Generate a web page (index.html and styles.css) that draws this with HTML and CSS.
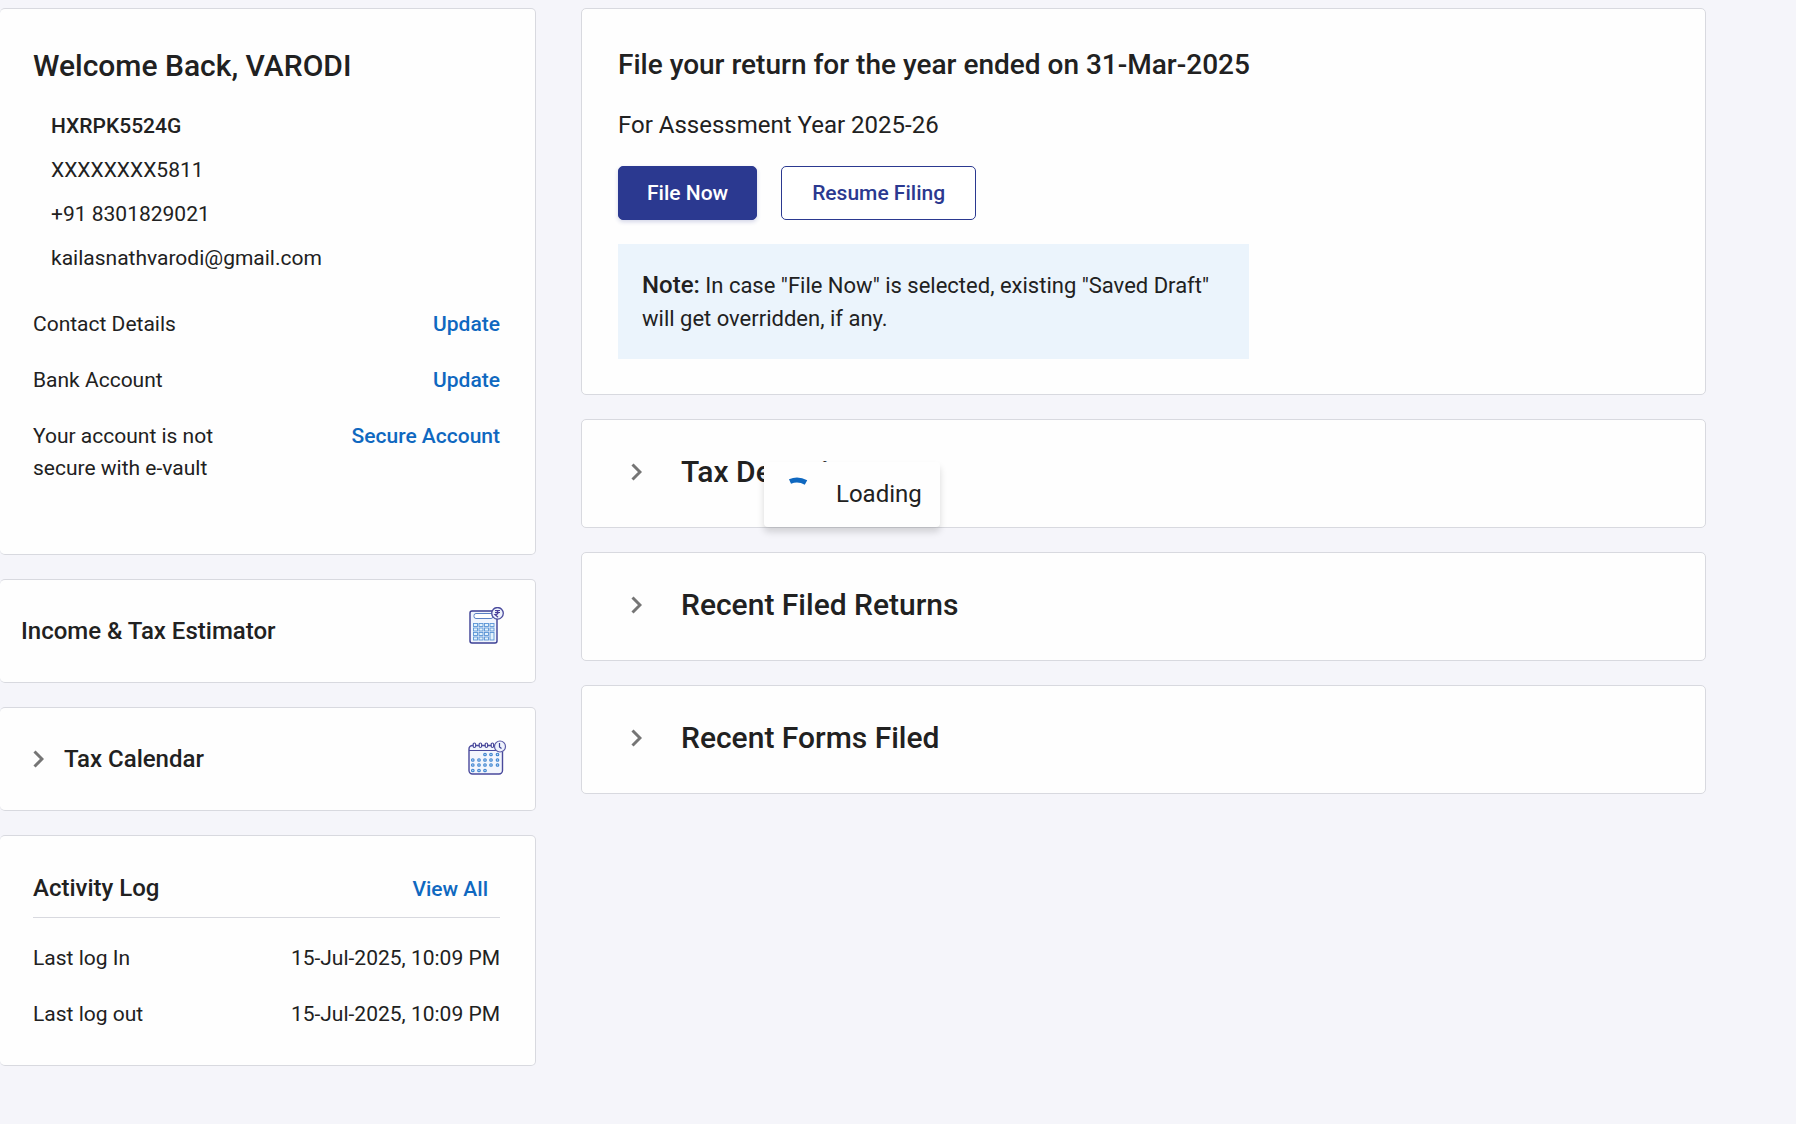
FILE: index.html
```html
<!DOCTYPE html>
<html lang="en">
<head>
    <meta charset="UTF-8">
    <meta name="viewport" content="width=device-width, initial-scale=1.0">
    <title>Dashboard</title>
    <link rel="stylesheet" href="styles.css">
</head>
<body>
    <div class="dashboard">
        <aside class="sidebar">
            <section class="card profile">
                <h1 class="profile-title">Welcome Back, VARODI</h1>
                <ul class="profile-info">
                    <li class="pan">HXRPK5524G</li>
                    <li>XXXXXXXX5811</li>
                    <li>+91 8301829021</li>
                    <li>kailasnathvarodi@gmail.com</li>
                </ul>
                <div class="rows">
                    <div class="row">
                        <span class="row-label">Contact Details</span>
                        <a class="link" href="#">Update</a>
                    </div>
                    <div class="row">
                        <span class="row-label">Bank Account</span>
                        <a class="link" href="#">Update</a>
                    </div>
                    <div class="row">
                        <span class="row-label">Your account is not secure with e-vault</span>
                        <a class="link" href="#">Secure Account</a>
                    </div>
                </div>
            </section>

            <section class="card tool">
                <h2 class="tool-title">Income &amp; Tax Estimator</h2>
                <svg class="tool-icon" viewBox="0 0 40 48" aria-hidden="true">
                    <rect x="2" y="4" width="27" height="32" rx="2" fill="#f1f5fd" stroke="#3b3f94" stroke-width="1.4"/>
                    <rect x="6" y="6.5" width="19" height="5" rx="2" fill="#fff" stroke="#5b82c4" stroke-width="1"/>
                    <g fill="#e3f2fc" stroke="#5a94d6" stroke-width="0.9">
                        <rect x="5.5" y="16.5" width="4" height="3"/><rect x="11" y="16.5" width="4" height="3"/><rect x="16.5" y="16.5" width="4" height="3"/><rect x="22" y="16.5" width="4" height="3"/>
                        <rect x="5.5" y="21" width="4" height="3"/><rect x="11" y="21" width="4" height="3"/><rect x="16.5" y="21" width="4" height="3"/><rect x="22" y="21" width="4" height="3"/>
                        <rect x="5.5" y="25.5" width="4" height="3"/><rect x="11" y="25.5" width="4" height="3"/><rect x="16.5" y="25.5" width="4" height="3"/><rect x="22" y="25.5" width="4" height="7.5"/>
                        <rect x="5.5" y="30" width="4" height="3"/><rect x="11" y="30" width="4" height="3"/><rect x="16.5" y="30" width="4" height="3"/>
                    </g>
                    <circle cx="29.5" cy="6.3" r="5.8" fill="#eef3fc" stroke="#4a4a9c" stroke-width="1.3"/>
                    <path d="M27 3.5h5M27 5.5h5M27 3.5c4 0 4 4 0 4l3 2.8" fill="none" stroke="#4a3f99" stroke-width="1.2"/>
                </svg>
            </section>

            <section class="card tool">
                <h2 class="tool-title">
                    <button class="toggle" type="button" aria-expanded="false">
                        <svg class="chevron" viewBox="0 0 11 18" aria-hidden="true"><path d="M1.5 1.5L9 9l-7.5 7.5"/></svg>
                        Tax Calendar
                    </button>
                </h2>
                <svg class="tool-icon" viewBox="0 0 40 48" aria-hidden="true">
                    <rect x="1" y="10.5" width="33.5" height="28.5" rx="3.5" fill="#f3f6fd" stroke="#4a4a9c" stroke-width="1.4"/>
                    <path d="M1 15.5h33.5" stroke="#4a4a9c" stroke-width="1.2"/>
                    <g fill="#fff" stroke="#4a4a9c" stroke-width="1.2">
                        <rect x="5.2" y="8" width="2.4" height="4.5" rx="1.2"/>
                        <rect x="11.2" y="8" width="2.4" height="4.5" rx="1.2"/>
                        <rect x="17.2" y="8" width="2.4" height="4.5" rx="1.2"/>
                        <rect x="23.2" y="8" width="2.4" height="4.5" rx="1.2"/>
                    </g>
                    <g fill="#bfe0f8" stroke="#3f83cf" stroke-width="1.1">
                        <circle cx="17" cy="19.5" r="1.3"/><circle cx="23" cy="19.5" r="1.3"/><circle cx="29.5" cy="19.5" r="1.3"/>
                        <circle cx="4.8" cy="25" r="1.3"/><circle cx="11" cy="25" r="1.3"/><circle cx="17" cy="25" r="1.3"/><circle cx="23" cy="25" r="1.3"/><circle cx="29.5" cy="25" r="1.3"/>
                        <circle cx="4.8" cy="30" r="1.3"/><circle cx="11" cy="30" r="1.3"/><circle cx="17" cy="30" r="1.3"/><circle cx="23" cy="30" r="1.3"/><circle cx="29.5" cy="30" r="1.3"/>
                        <circle cx="4.8" cy="35.5" r="1.3"/><circle cx="11" cy="35.5" r="1.3"/><circle cx="17" cy="35.5" r="1.3"/>
                    </g>
                    <circle cx="32" cy="11.5" r="5.5" fill="#eef2fc" stroke="#5a5aa6" stroke-width="1.2"/>
                    <path d="M31.5 8v4l2 1.5" fill="none" stroke="#3b3f94" stroke-width="1.2"/>
                </svg>
            </section>

            <section class="card activity">
                <div class="activity-header">
                    <h2 class="activity-title">Activity Log</h2>
                    <a class="link" href="#">View All</a>
                </div>
                <div class="rows">
                    <div class="row">
                        <span>Last log In</span>
                        <span>15-Jul-2025, 10:09 PM</span>
                    </div>
                    <div class="row">
                        <span>Last log out</span>
                        <span>15-Jul-2025, 10:09 PM</span>
                    </div>
                </div>
            </section>
        </aside>

        <main class="content">
            <section class="card filing">
                <h2 class="filing-title">File your return for the year ended on 31-Mar-2025</h2>
                <p class="filing-year">For Assessment Year 2025-26</p>
                <div class="filing-actions">
                    <button class="btn btn-primary" type="button">File Now</button>
                    <button class="btn btn-outline" type="button">Resume Filing</button>
                </div>
                <p class="note"><strong>Note:</strong> In case "File Now" is selected, existing "Saved Draft" will get overridden, if any.</p>
            </section>

            <section class="card panel">
                <h2 class="panel-title">
                    <button class="toggle" type="button" aria-expanded="false">
                        <svg class="chevron" viewBox="0 0 11 18" aria-hidden="true"><path d="M1.5 1.5L9 9l-7.5 7.5"/></svg>
                        Tax Deposit
                    </button>
                </h2>
                <div class="loading" role="status">
                    <svg class="spinner" viewBox="0 0 24 40" aria-hidden="true"><path d="M4 7.5Q12 4 20 8.5"/></svg>
                    <span>Loading</span>
                </div>
            </section>

            <section class="card panel">
                <h2 class="panel-title">
                    <button class="toggle" type="button" aria-expanded="false">
                        <svg class="chevron" viewBox="0 0 11 18" aria-hidden="true"><path d="M1.5 1.5L9 9l-7.5 7.5"/></svg>
                        Recent Filed Returns
                    </button>
                </h2>
            </section>

            <section class="card panel">
                <h2 class="panel-title">
                    <button class="toggle" type="button" aria-expanded="false">
                        <svg class="chevron" viewBox="0 0 11 18" aria-hidden="true"><path d="M1.5 1.5L9 9l-7.5 7.5"/></svg>
                        Recent Forms Filed
                    </button>
                </h2>
            </section>
        </main>
    </div>
</body>
</html>
```
FILE: styles.css
```css
* {
    box-sizing: border-box;
}

body {
    margin: 0;
    background-color: #f5f5fa;
    color: #212121;
    font-family: Roboto, "Liberation Sans", sans-serif;
    font-size: 21px;
    line-height: 32px;
}

h1, h2, p, ul {
    margin: 0;
    padding: 0;
    font-weight: 500;
}

.dashboard {
    display: grid;
    grid-template-columns: minmax(320px, 536px) minmax(0, 1fr);
    gap: 45px;
    align-items: start;
    padding: 8px 90px 58px 0;
}

.sidebar,
.content {
    display: flex;
    flex-direction: column;
    gap: 24px;
}

.card {
    background-color: #fefefe;
    border: 1px solid #d8d9df;
    border-radius: 5px;
}

.sidebar .card {
    border-left: 0;
}

.link {
    color: #0f68c0;
    font-weight: 500;
    text-decoration: none;
}

/* profile */
.profile {
    padding: 39px 35px 70px 33px;
}

.profile-title {
    font-size: 30px;
    line-height: 36px;
}

.profile-info {
    display: flex;
    flex-direction: column;
    gap: 12px;
    margin: 26px 0 34px;
    padding-left: 18px;
    list-style: none;
    font-weight: 400;
}

.pan {
    font-weight: 500;
}

.rows {
    display: flex;
    flex-direction: column;
    gap: 24px;
}

.row {
    display: flex;
    justify-content: space-between;
}

.row-label {
    max-width: 200px;
}

/* estimator and calendar */
.tool {
    display: flex;
    align-items: center;
    justify-content: space-between;
    min-height: 104px;
    padding: 0 27px 0 21px;
}

.tool-title {
    font-size: 24px;
}

.tool-icon {
    width: 40px;
    height: 48px;
}

.toggle {
    display: flex;
    align-items: center;
    gap: 20px;
    padding: 0 0 0 12px;
    border: 0;
    background: none;
    color: inherit;
    font: inherit;
    cursor: pointer;
}

.chevron {
    width: 11px;
    height: 18px;
    fill: none;
    stroke: #757575;
    stroke-width: 3;
}

/* activity log */
.activity {
    padding: 36px 35px 35px 33px;
}

.activity-header {
    display: flex;
    align-items: baseline;
    justify-content: space-between;
    margin-bottom: 24px;
    padding: 0 12px 12px 0;
    border-bottom: 1px solid #d8d9df;
}

.activity-title {
    font-size: 24px;
}

/* file return */
.filing {
    padding: 38px 36px 35px;
}

.filing-title {
    font-size: 28px;
    line-height: 36px;
}

.filing-year {
    margin-top: 26px;
    font-size: 24px;
    font-weight: 400;
}

.filing-actions {
    display: flex;
    flex-wrap: wrap;
    gap: 24px;
    margin: 25px 0 24px;
}

.btn {
    height: 54px;
    border: 1px solid #2b3990;
    border-radius: 5px;
    font: inherit;
    font-weight: 500;
    cursor: pointer;
}

.btn-primary {
    padding: 0 28px;
    background-color: #2b3990;
    color: #fff;
    box-shadow: 0 2px 4px rgba(43, 57, 144, 0.2);
}

.btn-outline {
    padding: 0 30px;
    background-color: #fff;
    color: #2b3990;
}

.note {
    max-width: 631px;
    padding: 25px 24px 24px;
    background-color: #ebf4fc;
    font-size: 22px;
    font-weight: 400;
    line-height: 33px;
}

.note strong {
    font-size: 24px;
    font-weight: 500;
}

/* collapsed panels */
.panel {
    position: relative;
    display: flex;
    align-items: center;
    min-height: 109px;
    padding: 0 49px;
}

.panel-title {
    padding-bottom: 4px;
    font-size: 30px;
}

.panel .toggle {
    gap: 39px;
    padding: 0;
}

.loading {
    position: absolute;
    top: 42px;
    left: 182px;
    display: flex;
    align-items: center;
    gap: 26px;
    height: 65px;
    padding: 0 18px 2px 22px;
    background-color: #fefefe;
    border-radius: 4px;
    box-shadow: 0 5px 7px rgba(0, 0, 0, 0.15);
    font-size: 24px;
}

.spinner {
    width: 24px;
    height: 40px;
    fill: none;
    stroke: #0f68c0;
    stroke-width: 5;
}

@media (max-width: 900px) {
    .dashboard {
        grid-template-columns: minmax(0, 1fr);
        gap: 24px;
        padding-right: 0;
    }
}
```
